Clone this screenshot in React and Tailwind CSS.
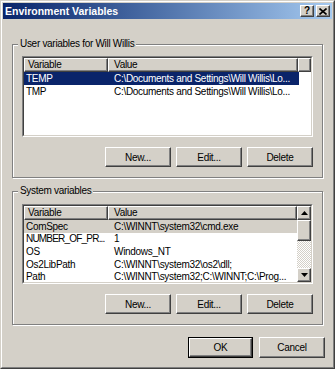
import React from 'react';

const userVars = [
  { name: 'TEMP', value: 'C:\\Documents and Settings\\Will Willis\\Lo...' },
  { name: 'TMP', value: 'C:\\Documents and Settings\\Will Willis\\Lo...' },
];

const systemVars = [
  { name: 'ComSpec', value: 'C:\\WINNT\\system32\\cmd.exe' },
  { name: 'NUMBER_OF_PR...', value: '1', tight: true },
  { name: 'OS', value: 'Windows_NT' },
  { name: 'Os2LibPath', value: 'C:\\WINNT\\system32\\os2\\dll;' },
  { name: 'Path', value: 'C:\\WINNT\\system32;C:\\WINNT;C:\\Prog...' },
];

const raised =
  'border border-t-white border-l-white border-r-[#404040] border-b-[#404040] shadow-[inset_-1px_-1px_0_#808080] bg-[#d4d0c8]';

function Button({ children, isDefault }) {
  if (isDefault) {
    return (
      <div className="w-[65px] h-[21px] border border-black">
        <button className={`w-full h-full ${raised} flex items-center justify-center`}>{children}</button>
      </div>
    );
  }
  return (
    <button className={`w-[66px] h-[21px] ${raised} flex items-center justify-center`}>{children}</button>
  );
}

function Arrow({ down }) {
  return (
    <svg width="7" height="4" viewBox="0 0 7 4">
      {down ? <path d="M0 0h7L3.5 4z" fill="#000" /> : <path d="M0 4h7L3.5 0z" fill="#000" />}
    </svg>
  );
}

function ScrollBar() {
  return (
    <div className="w-[14px] h-full flex flex-col">
      <div className={`h-[14px] ${raised} flex items-center justify-center`}>
        <Arrow />
      </div>
      <div className={`h-[21px] ${raised}`}></div>
      <div className="flex-1 bg-[image:repeating-conic-gradient(#ffffff_0_25%,#d4d0c8_0_50%)] bg-[length:2px_2px]"></div>
      <div className={`h-[14px] ${raised} flex items-center justify-center`}>
        <Arrow down />
      </div>
    </div>
  );
}

function ListView({ rows, system }) {
  return (
    <div
      className={`${system ? 'h-[80px]' : 'h-[81px]'} bg-white border border-t-[#808080] border-l-[#808080] border-r-white border-b-white`}
    >
      <div className="h-full flex border border-t-[#404040] border-l-[#404040] border-r-[#d4d0c8] border-b-[#d4d0c8] overflow-hidden">
        <div className="flex-1 min-w-0 overflow-hidden">
          {/* Header */}
          <div className="flex h-[14px]">
            <div className={`w-[84px] ${raised} pl-[3px] leading-[12px]`}>Variable</div>
            <div className={`${system ? 'flex-1' : 'w-[190px]'} ${raised} pl-[5px] leading-[12px]`}>Value</div>
            {!system && <div className={`flex-1 ${raised}`}></div>}
          </div>

          {rows.map((row, i) => (
            <div
              key={row.name}
              className={`flex items-center whitespace-nowrap ${system ? 'h-[12.67px] w-[273px]' : 'h-[13px] w-[275px]'} ${
                i === 0 ? (system ? 'bg-[#d4d0c8] text-black' : 'bg-[#0a246a] text-white') : 'text-black'
              }`}
            >
              <div className={`w-[84px] pl-[2px] ${row.tight ? 'tracking-[-0.8px]' : ''}`}>{row.name}</div>
              <div className="flex-1 pl-[6px] overflow-hidden">{row.value}</div>
            </div>
          ))}
        </div>
        {system && <ScrollBar />}
      </div>
    </div>
  );
}

function ButtonRow() {
  return (
    <div className="flex justify-end gap-[5px] mt-[10px]">
      <button className={`w-[66px] h-[20px] ${raised} flex items-center justify-center`}>New...</button>
      <button className={`w-[66px] h-[20px] ${raised} flex items-center justify-center`}>Edit...</button>
      <button className={`w-[66px] h-[20px] ${raised} flex items-center justify-center`}>Delete</button>
    </div>
  );
}

export default function App() {
  return (
    <div className="w-[335px] h-[369px] bg-[#d4d0c8] border border-t-[#d4d0c8] border-l-[#d4d0c8] border-r-[#404040] border-b-[#404040] font-['Liberation_Sans',Arial,sans-serif] text-[10px] tracking-[-0.3px] text-black">
      <div className="h-full p-[1px] border border-t-white border-l-white border-r-[#808080] border-b-[#808080] flex flex-col">
        {/* Title bar */}
        <div className="h-[16px] flex items-center justify-between pl-[2px] pr-[2px] bg-linear-to-r from-[#0a246a] to-[#a6caf0]">
          <span className="text-white font-bold text-[10.5px] tracking-normal leading-none">Environment Variables</span>
          <div className="flex gap-[2px]">
            <div className={`w-[14px] h-[12px] ${raised} flex items-center justify-center font-bold text-[10px] leading-none tracking-normal`}>
              ?
            </div>
            <div className={`w-[14px] h-[12px] ${raised} flex items-center justify-center`}>
              <svg width="8" height="7" viewBox="0 0 8 7">
                <path d="M0.5 0.5L7.5 6.5M7.5 0.5L0.5 6.5" stroke="#000" strokeWidth="1.6" />
              </svg>
            </div>
          </div>
        </div>

        <div className="px-[9px] flex flex-col">
          {/* User variables */}
          <div className="relative mt-[25px] border border-[#808080] shadow-[inset_1px_1px_0_#fff,1px_1px_0_#fff] px-[9px] pt-[11px] pb-[10px]">
            <span className="absolute -top-[7px] left-[5px] px-[2px] bg-[#d4d0c8] leading-[12px]">
              User variables for Will Willis
            </span>
            <ListView rows={userVars} />
            <ButtonRow />
          </div>

          {/* System variables */}
          <div className="relative mt-[13px] border border-[#808080] shadow-[inset_1px_1px_0_#fff,1px_1px_0_#fff] px-[9px] pt-[12px] pb-[10px]">
            <span className="absolute -top-[7px] left-[5px] px-[2px] bg-[#d4d0c8] leading-[12px]">System variables</span>
            <ListView rows={systemVars} system />
            <ButtonRow />
          </div>

          <div className="flex justify-end gap-[6px] mt-[12px] -mr-[2px]">
            <Button isDefault>OK</Button>
            <Button>Cancel</Button>
          </div>
        </div>
      </div>
    </div>
  );
}
